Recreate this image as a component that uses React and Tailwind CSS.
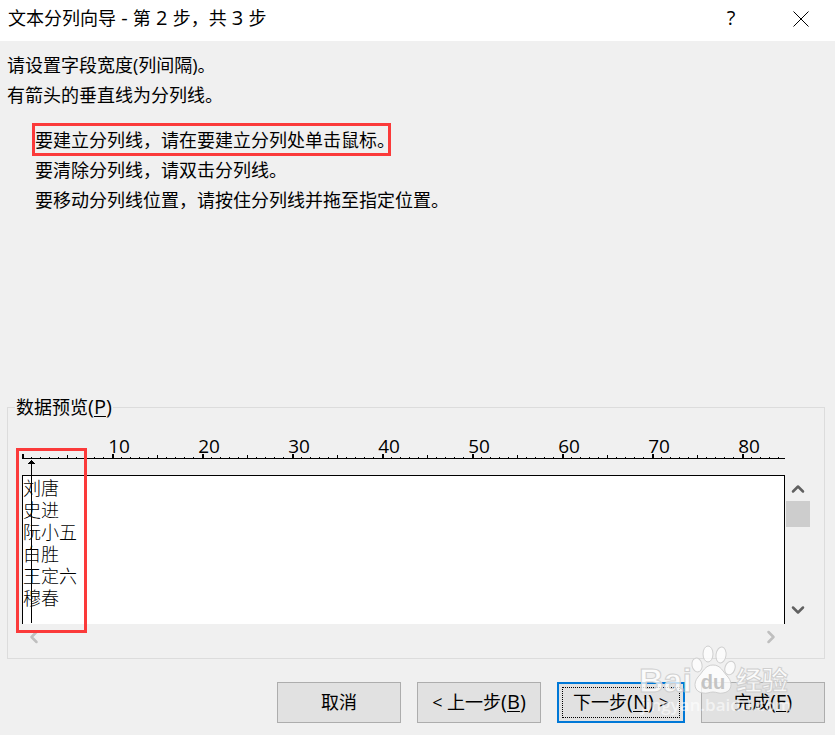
import React from 'react';
import { ChevronDown, ChevronLeft, ChevronRight, ChevronUp } from 'lucide-react';

const names = ['刘唐', '史进', '阮小五', '白胜', '王定六', '穆春'];
const ticks = Array.from({ length: 85 }, (_, i) => i);
const toes = [
  { cx: 57, cy: 20, rx: 5, ry: 7, tilt: -12 },
  { cx: 68, cy: 9, rx: 5, ry: 8, tilt: 0 },
  { cx: 81, cy: 10, rx: 5, ry: 8, tilt: 8 },
  { cx: 90, cy: 23, rx: 5, ry: 7, tilt: 20 },
];

function Key({ children }) {
  return (
    <span className="text-xl leading-5">
      (<u className="decoration-1 underline-offset-2">{children}</u>)
    </span>
  );
}

function TitleBar() {
  return (
    <header className="flex h-[41px] items-center justify-between bg-white pl-2">
      <h1 className="pb-[5px] text-lg leading-7">
        文本分列向导<span className="text-xl leading-5"> - </span>第
        <span className="text-xl leading-5"> 2 </span>步，共<span className="text-xl leading-5"> 3 </span>步
      </h1>
      <div className="flex h-full items-center">
        <button type="button" aria-label="帮助" className="h-full w-[70px] pb-[5px] text-xl leading-7">
          ?
        </button>
        <button type="button" aria-label="关闭" className="flex h-full w-[69px] items-center justify-center pb-1">
          <svg width="16" height="16" stroke="currentColor" fill="none">
            <path d="M0.5 0.5l15 15M15.5 0.5l-15 15" />
          </svg>
        </button>
      </div>
    </header>
  );
}

function Ruler() {
  return (
    <svg className="block h-7 w-full" aria-hidden="true">
      {ticks.map((i) => {
        const x = i * 9;
        if (i % 10 === 0) {
          return <rect key={i} x={x} y="22" width="2" height="5" />;
        }
        return i % 5 === 0
          ? <rect key={i} x={x} y="23" width="1" height="4" />
          : <rect key={i} x={x} y="25" width="1" height="2" />;
      })}
      {[10, 20, 30, 40, 50, 60, 70, 80].map((n) => (
        <text key={n} x={n * 9 + 7} y="21" textAnchor="middle" fontSize="19">{n}</text>
      ))}
      <rect x="0" y="26" width="100%" height="1" />
    </svg>
  );
}

function DataPreview() {
  return (
    <fieldset className="ml-[7px] mr-[10px] min-w-0 border border-[#dcdcdc] pb-2 pl-[14px] pr-[14px]">
      <legend className="-ml-[7px] px-px text-lg leading-5">
        数据预览<Key>P</Key>
      </legend>
      <div className="flex pt-[15px]">
        <div className="relative min-w-0 flex-1">
          <Ruler />
          <div className="mt-[15px] h-[149px] border-x border-t border-black bg-white pt-px">
            {names.map((name) => (
              <p key={name} className="text-lg font-light leading-[22px]">{name}</p>
            ))}
          </div>
          {/* column break arrow */}
          <svg className="absolute left-[5px] top-[28px] h-[163px] w-[9px]" aria-hidden="true">
            <path d="M4 0h1v1h1v1h1v1h1v1H1V3h1V2h1V1h1z" />
            <rect x="4" y="0" width="1" height="163" />
          </svg>
          <div className="flex h-[26px] items-center justify-between pl-[2px] pr-1 text-[#bfbfbf]">
            <button type="button" aria-label="向左滚动"><ChevronLeft size={20} strokeWidth={3} /></button>
            <button type="button" aria-label="向右滚动"><ChevronRight size={20} strokeWidth={3} /></button>
          </div>
          <div className="pointer-events-none absolute -left-[6px] top-[16px] h-[185px] w-[71px] border-3 border-[#fb3a3a]" />
        </div>
        <div className="ml-px mt-[44px] flex h-[147px] w-6 flex-col items-center text-[#606060]">
          <button type="button" aria-label="向上滚动" className="flex h-[25px] items-center"><ChevronUp size={20} strokeWidth={3} /></button>
          <div className="h-[26px] w-full bg-[#cdcdcd]" />
          <button type="button" aria-label="向下滚动" className="mt-auto flex h-[26px] items-center"><ChevronDown size={20} strokeWidth={3} /></button>
        </div>
      </div>
    </fieldset>
  );
}

function Watermark() {
  return (
    <svg className="pointer-events-none absolute bottom-[8px] right-[43px] h-[82px] w-[152px]" aria-hidden="true">
      <g fill="#fff" fillOpacity="0.75" stroke="#cfcfcf" strokeWidth="1">
        <text x="-1" y="47" fontSize="34" fontWeight="700" className="font-['Liberation_Sans']">Bai</text>
        {toes.map((t) => (
          <ellipse key={t.cx} cx={t.cx} cy={t.cy} rx={t.rx} ry={t.ry} transform={`rotate(${t.tilt} ${t.cx} ${t.cy})`} />
        ))}
        <path d="M73 20c8 0 10 7 15 12 5 6 4 15-5 16-4 1-6-1-10-1s-6 2-10 1c-9-1-10-10-5-16 5-5 7-12 15-12z" />
        <text x="96" y="45" fontSize="26" fontWeight="700">经验</text>
      </g>
      <text x="73" y="44" textAnchor="middle" fontSize="20" fontWeight="700" fill="#c4c4c4" className="font-['Liberation_Sans']">du</text>
      <text x="1" y="66" fontSize="17" fontWeight="600" fill="#fff" fillOpacity="0.6">jingyan.baidu.com</text>
    </svg>
  );
}

const buttonClass = 'h-[41px] w-[124px] border border-[#adadad] bg-[#e1e1e1] pb-px text-lg leading-6';

export default function App() {
  return (
    <main className="relative min-h-screen bg-[#f0f0f0] font-['Open_Sans','Noto_Sans_CJK_SC',sans-serif] text-black">
      <TitleBar />
      <section className="px-[7px] pt-[9px] text-lg leading-[30px]">
        <p>请设置字段宽度(列间隔)。</p>
        <p>有箭头的垂直线为分列线。</p>
        <div className="mt-[15px] pl-7">
          <p className="relative">
            要建立分列线，请在要建立分列处单击鼠标。
            <span className="pointer-events-none absolute -left-[3px] -top-[2px] h-[33px] w-[359px] border-3 border-[#fb3a3a]" />
          </p>
          <p>要清除分列线，请双击分列线。</p>
          <p>要移动分列线位置，请按住分列线并拖至指定位置。</p>
        </div>
      </section>
      <section className="mt-[182px]">
        <DataPreview />
      </section>
      <footer className="flex justify-end gap-4 px-[10px] pb-3 pt-[23px]">
        <button type="button" className={buttonClass}>取消</button>
        <button type="button" className={buttonClass}>&lt; 上一步<Key>B</Key></button>
        <button type="button" className="h-[41px] w-[128px] border-2 border-[#0078d7] bg-[#e1e1e1] p-[3px] text-lg leading-7">
          <span className="block h-full border border-dotted border-black">
            下一步<Key>N</Key> &gt;
          </span>
        </button>
        <button type="button" className={buttonClass}>完成<Key>F</Key></button>
      </footer>
      <Watermark />
    </main>
  );
}
